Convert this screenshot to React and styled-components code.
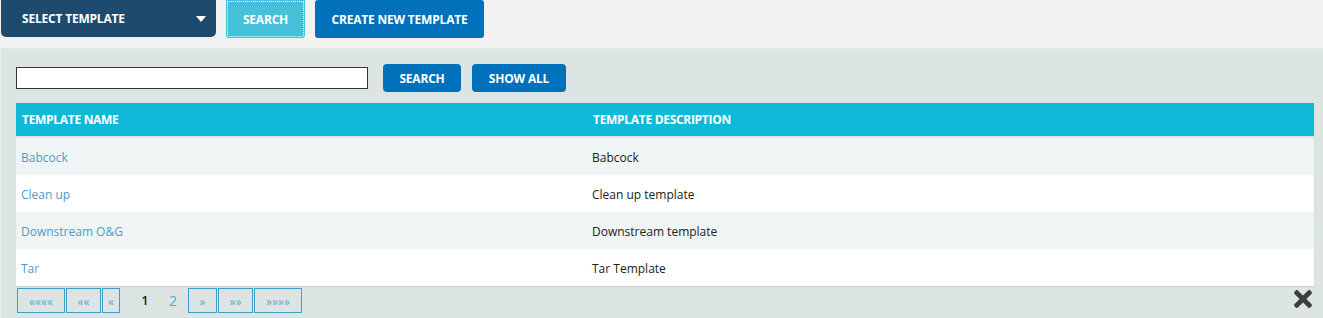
import React from 'react'
import styled, { createGlobalStyle } from 'styled-components'
import { FaTimes } from 'react-icons/fa'

const GlobalStyle = createGlobalStyle`
  body {
    margin:0;
    background:#dde5e4;
    font-family:"Open Sans", "Liberation Sans", sans-serif;
    font-size:12px;
    color:#222;
  }
`

const Heading = `"Open Sans", "Liberation Sans", sans-serif`

const TopBar = styled.div`
  display:flex;
  align-items:flex-start;
  gap:10px;
  height:48px;
  padding-left:1px;
  background:#f2f2f2;
  border-bottom:1px solid #e6e8e8;
`

const Btn = styled.button`
  border:none;
  color:#fff;
  font-family:${Heading};
  font-weight:bold;
  font-size:12px;
  letter-spacing:-0.2px;
  text-transform:uppercase;
  cursor:pointer;
  padding:0;
  background:${p => p.$bg || '#0071ba'};
  height:${p => p.$h || 28}px;
  width:${p => p.$w}px;
  border-radius:${p => p.$radius || '4px'};
`

const SelectBtn = styled(Btn)`
  display:flex;
  align-items:center;
  justify-content:space-between;
  padding:0 10px 0 21px;
`

const Caret = styled.span`
  width:0;
  height:0;
  border-left:5px solid transparent;
  border-right:5px solid transparent;
  border-top:6px solid #fff;
`

const FocusBtn = styled(Btn)`
  outline:1px dotted #fff;
  outline-offset:-2px;
`

const Panel = styled.div`
  min-height:269px;
  padding:15px 9px 0 15px;
  border-left:1px solid #e8eeed;
`

const ToolRow = styled.div`
  display:flex;
  align-items:center;
  gap:11px;
`

const SearchInput = styled.input`
  width:352px;
  height:22px;
  box-sizing:border-box;
  border:1px solid #333;
  margin:0 4px 0 0;
  padding:0 4px;
`

const Table = styled.div`
  margin-top:11px;
  box-shadow:0 1px 1px rgba(0,0,0,0.08);
`

const Row = styled.div`
  display:grid;
  grid-template-columns:571px 1fr;
  align-items:center;
  height:${p => p.$head ? 33 : 37}px;
  background:${p => p.$head ? '#10b9d7' : (p.$alt ? '#eff5f5' : '#fff')};
  border-bottom:${p => p.$head ? '2px solid #dde5e4' : 'none'};
`

const HeadCell = styled.div`
  padding-left:6px;
  color:#fff;
  font-family:${Heading};
  font-weight:bold;
  font-size:12px;
  letter-spacing:-0.3px;
  text-transform:uppercase;
`

const Cell = styled.div`
  padding:2px 0 0 5px;
  font-size:12px;
`

const Link = styled.a`
  color:#4d9cc7;
  text-decoration:none;
`

const Footer = styled.div`
  display:flex;
  align-items:center;
  justify-content:space-between;
  padding:2px 0 0 1px;
`

const Pager = styled.div`
  display:flex;
  align-items:center;
  gap:1px;
`

const PageBtn = styled.a`
  display:flex;
  align-items:center;
  justify-content:center;
  box-sizing:border-box;
  width:${p => p.$w}px;
  height:25px;
  padding-top:1px;
  border:1px solid #3f9ec6;
  color:#5aa8d0;
  font-size:12px;
`

const PageNums = styled.div`
  display:flex;
  margin-left:10px;
`

const PageNum = styled.span`
  width:28px;
  text-align:center;
  font-size:${p => p.$current ? 13 : 14}px;
  font-weight:${p => p.$current ? 600 : 400};
  color:${p => p.$current ? '#222' : '#5aa8d0'};
`

const Close = styled.span`
  display:flex;
  color:#3e3e3e;
  margin:-4px -2px 0 0;
`

const rows = [
  { name: 'Babcock', desc: 'Babcock' },
  { name: 'Clean up', desc: 'Clean up template' },
  { name: 'Downstream O&G', desc: 'Downstream template' },
  { name: 'Tar', desc: 'Tar Template' },
]

const App = () => {
  return (
    <>
      <GlobalStyle />
      <TopBar>
        <SelectBtn $bg="#1e4a6d" $w={215} $h={37} $radius="0 0 5px 5px">
          Select Template <Caret />
        </SelectBtn>
        <FocusBtn $bg="#46c1d9" $w={79} $h={38} $radius="0 0 3px 3px">Search</FocusBtn>
        <Btn $bg="#0071ba" $w={169} $h={38} $radius="3px">Create New Template</Btn>
      </TopBar>
      <Panel>
        <ToolRow>
          <SearchInput type="text" />
          <Btn $w={78}>Search</Btn>
          <Btn $w={94}>Show All</Btn>
        </ToolRow>
        <Table>
          <Row $head>
            <HeadCell>Template Name</HeadCell>
            <HeadCell>Template Description</HeadCell>
          </Row>
          {rows.map((r, i) => (
            <Row key={i} $alt={i % 2 === 0}>
              <Cell><Link href="#">{r.name}</Link></Cell>
              <Cell>{r.desc}</Cell>
            </Row>
          ))}
        </Table>
        <Footer>
          <Pager>
            <PageBtn $w={48}>««««</PageBtn>
            <PageBtn $w={35}>««</PageBtn>
            <PageBtn $w={18}>«</PageBtn>
            <PageNums>
              <PageNum $current>1</PageNum>
              <PageNum>2</PageNum>
            </PageNums>
            <PageBtn $w={29}>»</PageBtn>
            <PageBtn $w={35}>»»</PageBtn>
            <PageBtn $w={48}>»»»»</PageBtn>
          </Pager>
          <Close><FaTimes size={26} /></Close>
        </Footer>
      </Panel>
    </>
  )
}

export default App
